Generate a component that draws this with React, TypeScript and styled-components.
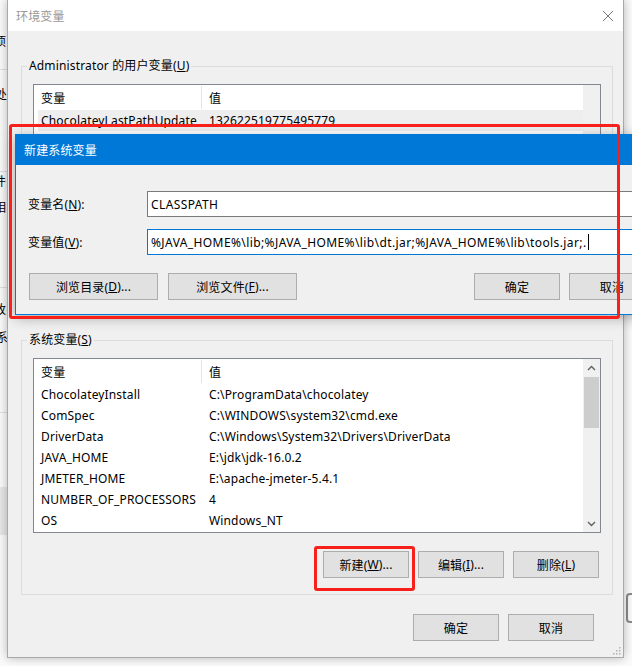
import React from "react";
import styled, { createGlobalStyle } from "styled-components";

const FONT = `"Noto Sans", "Noto Sans CJK SC", sans-serif`;

const GlobalStyle = createGlobalStyle`
  html, body { margin: 0; padding: 0; }
  body {
    width: 632px; height: 666px; overflow: hidden;
    font-family: ${FONT}; font-size: 12px; color: #000;
    letter-spacing: 0.15px;
  }
  * { box-sizing: border-box; }
`;

const Desktop = styled.div`
  position: relative;
  width: 632px;
  height: 666px;
  overflow: hidden;
  background: #f4f4f4;
`;

/* ---------- window behind ---------- */
const BackWindow = styled.div`
  position: absolute;
  inset: 0;
  background: #fbfbfb;
  display: flex;
  justify-content: space-between;
`;
const BackColumn = styled.div`
  width: 8px;
  display: flex;
  flex-direction: column;
  overflow: hidden;
`;
const BackSection = styled.div<{ $h: number; $pad?: number; $bg?: string; $line?: boolean; $gap?: number }>`
  flex-shrink: 0;
  height: ${(p) => p.$h}px;
  padding-top: ${(p) => p.$pad ?? 0}px;
  background: ${(p) => p.$bg ?? "transparent"};
  border-bottom: ${(p) => (p.$line ? "1px solid #e0e0e0" : "none")};
  display: flex;
  flex-direction: column;
  gap: ${(p) => p.$gap ?? 10}px;
`;
const BackGlyph = styled.span<{ $shift: number }>`
  display: block;
  margin-left: ${(p) => -p.$shift}px;
  line-height: 16px;
  font-size: 12px;
  white-space: nowrap;
`;
const BackControl = styled.div`
  width: 14px;
  height: 30px;
  margin-left: 2px;
  border: 2px solid #8a8a8a;
  border-radius: 4px;
`;

/* ---------- main window ---------- */
const Window = styled.div`
  position: absolute;
  left: 7px;
  top: -1px;
  width: 617px;
  height: 659px;
  background: #f0f0f0;
  border: 1px solid #a9a9a9;
  box-shadow: 0 0 10px rgba(0, 0, 0, 0.28);
  display: flex;
  flex-direction: column;
`;
const TitleBar = styled.div`
  height: 31px;
  flex-shrink: 0;
  background: #fff;
  display: flex;
  align-items: center;
  justify-content: space-between;
  padding-left: 8px;
  padding-right: 9px;
  color: #999;
  font-size: 12px;
`;
const WindowBody = styled.div`
  flex: 1;
  display: flex;
  flex-direction: column;
  padding: 27px 10px 0 13px;
  position: relative;
`;
const Group = styled.fieldset<{ $mt?: number }>`
  margin: ${(p) => p.$mt ?? 0}px 0 0 0;
  border: 1px solid #dcdcdc;
  padding: 10px 11px 16px 11px;
  min-width: 0;
`;
const GroupLegend = styled.legend`
  margin-left: -6px;
  padding: 0 2px;
  line-height: 16px;
  font-size: 12px;
`;
const ListView = styled.div<{ $h: number }>`
  height: ${(p) => p.$h}px;
  border: 1px solid #828790;
  background: #fff;
  display: flex;
`;
const ListContent = styled.div`
  flex: 1;
  display: flex;
  flex-direction: column;
  overflow: hidden;
`;
const HeaderRow = styled.div`
  height: 25px;
  flex-shrink: 0;
  display: flex;
  align-items: stretch;
`;
const HeaderCell = styled.div<{ $w?: number; $divider?: boolean }>`
  ${(p) => (p.$w ? `width: ${p.$w}px; flex-shrink: 0;` : "flex: 1;")}
  padding-left: 7px;
  display: flex;
  align-items: center;
  border-right: ${(p) => (p.$divider ? "1px solid #e5e5e5" : "none")};
  margin: 1px 0 1px 0;
`;
const Row = styled.div<{ $selected?: boolean }>`
  height: 21px;
  flex-shrink: 0;
  display: flex;
  align-items: center;
  margin-left: 4px;
  background: ${(p) => (p.$selected ? "#eeeeee" : "transparent")};
  white-space: nowrap;
`;
const Cell = styled.div<{ $w?: number }>`
  ${(p) => (p.$w ? `width: ${p.$w}px; flex-shrink: 0;` : "flex: 1;")}
  padding-left: 3px;
  overflow: hidden;
`;
const ValueCell = styled.div`
  flex: 1;
  padding-left: 7px;
  overflow: hidden;
`;
const ScrollBar = styled.div`
  width: 17px;
  flex-shrink: 0;
  background: #f0f0f0;
  display: flex;
  flex-direction: column;
`;
const ScrollArrow = styled.div`
  height: 17px;
  flex-shrink: 0;
  display: flex;
  align-items: center;
  justify-content: center;
`;
const ScrollTrack = styled.div`
  flex: 1;
  display: flex;
  flex-direction: column;
`;
const ScrollThumb = styled.div`
  height: 51px;
  margin: 1px 1px 0 1px;
  background: #cdcdcd;
`;
const ButtonRow = styled.div<{ $mt?: number; $pr?: number; $pl?: number }>`
  display: flex;
  justify-content: flex-end;
  gap: 9px;
  margin-top: ${(p) => p.$mt ?? 0}px;
  padding-right: ${(p) => p.$pr ?? 0}px;
  padding-left: ${(p) => p.$pl ?? 0}px;
`;
const Button = styled.button<{ $w?: number }>`
  width: ${(p) => p.$w ?? 86}px;
  height: 27px;
  padding: 0;
  background: #e1e1e1;
  border: 1px solid #adadad;
  border-radius: 0;
  font-family: ${FONT};
  font-size: 12px;
  letter-spacing: 0.15px;
  color: #000;
  display: flex;
  align-items: center;
  justify-content: center;
  white-space: nowrap;
`;
const Grip = styled.div`
  position: absolute;
  right: 2px;
  bottom: 2px;
  width: 10px;
  height: 10px;
  display: flex;
`;

/* ---------- overlay dialog ---------- */
const Dialog = styled.div`
  position: absolute;
  left: 15px;
  top: 134px;
  width: 653px;
  height: 181px;
  background: #f0f0f0;
  border: 1px solid #0078d7;
  box-shadow: 0 3px 12px rgba(0, 0, 0, 0.3);
  display: flex;
  flex-direction: column;
`;
const DialogTitle = styled.div`
  height: 30px;
  flex-shrink: 0;
  background: #0078d7;
  color: #fff;
  display: flex;
  align-items: center;
  padding-left: 8px;
  font-size: 12px;
`;
const DialogBody = styled.div`
  flex: 1;
  padding: 26px 12px 0 12px;
  display: flex;
  flex-direction: column;
  gap: 12px;
`;
const FieldRow = styled.div`
  display: grid;
  grid-template-columns: 119px 1fr;
  align-items: center;
`;
const TextBox = styled.div<{ $focused?: boolean }>`
  height: 26px;
  background: #fff;
  border: 1px solid ${(p) => (p.$focused ? "#0078d7" : "#7a7a7a")};
  padding: 0 3px;
  display: flex;
  align-items: center;
  white-space: nowrap;
  overflow: hidden;
  letter-spacing: 0.4px;
`;
const Caret = styled.span`
  display: inline-block;
  width: 1px;
  height: 16px;
  background: #000;
  margin-left: 1px;
`;
const DialogButtons = styled.div`
  display: flex;
  gap: 10px;
  margin-top: 6px;
  padding-left: 1px;
`;
const Spacer = styled.div`
  flex: 1;
`;
const DialogButtonPair = styled.div`
  display: flex;
  gap: 9px;
`;

/* ---------- annotations ---------- */
const Mark = styled.div<{ $l: number; $t: number; $w: number; $h: number }>`
  position: absolute;
  left: ${(p) => p.$l}px;
  top: ${(p) => p.$t}px;
  width: ${(p) => p.$w}px;
  height: ${(p) => p.$h}px;
  border: 3px solid #f7201a;
  border-radius: 3px;
  pointer-events: none;
`;

const Mn = ({ k }: { k: string }) => <span style={{ textDecoration: "underline" }}>{k}</span>;

const Chevron = ({ up }: { up?: boolean }) => (
  <svg width="9" height="6" viewBox="0 0 9 6">
    <polyline
      points={up ? "1,5 4.5,1.5 8,5" : "1,1 4.5,4.5 8,1"}
      fill="none"
      stroke="#606060"
      strokeWidth="1.4"
    />
  </svg>
);

const CloseIcon = () => (
  <svg width="12" height="12" viewBox="0 0 12 12">
    <path d="M1 1 L11 11 M11 1 L1 11" stroke="#777" strokeWidth="1" fill="none" />
  </svg>
);

const sysVars: [string, string][] = [
  ["ChocolateyInstall", "C:\\ProgramData\\chocolatey"],
  ["ComSpec", "C:\\WINDOWS\\system32\\cmd.exe"],
  ["DriverData", "C:\\Windows\\System32\\Drivers\\DriverData"],
  ["JAVA_HOME", "E:\\jdk\\jdk-16.0.2"],
  ["JMETER_HOME", "E:\\apache-jmeter-5.4.1"],
  ["NUMBER_OF_PROCESSORS", "4"],
  ["OS", "Windows_NT"],
];

const userVars: [string, string][] = [
  ["ChocolateyLastPathUpdate", "132622519775495779"],
  ["OneDrive", "C:\\Users\\Administrator\\OneDrive"],
  ["Path", "C:\\Users\\Administrator\\AppData\\Local\\Microsoft\\WindowsApps;"],
  ["TEMP", "C:\\Users\\Administrator\\AppData\\Local\\Temp"],
  ["TMP", "C:\\Users\\Administrator\\AppData\\Local\\Temp"],
];

const VarList = ({
  rows,
  height,
  selectedFirst,
  arrows,
}: {
  rows: [string, string][];
  height: number;
  selectedFirst?: boolean;
  arrows?: boolean;
}) => (
  <ListView $h={height}>
    <ListContent>
      <HeaderRow>
        <HeaderCell $w={168} $divider>变量</HeaderCell>
        <HeaderCell>值</HeaderCell>
      </HeaderRow>
      {rows.map(([n, v], i) => (
        <Row key={n} $selected={selectedFirst && i === 0}>
          <Cell $w={164}>{n}</Cell>
          <ValueCell>{v}</ValueCell>
        </Row>
      ))}
    </ListContent>
    <ScrollBar>
      {arrows && (
        <>
          <ScrollArrow>
            <Chevron up />
          </ScrollArrow>
          <ScrollTrack>
            <ScrollThumb />
          </ScrollTrack>
          <ScrollArrow>
            <Chevron />
          </ScrollArrow>
        </>
      )}
    </ScrollBar>
  </ListView>
);

export default function App() {
  return (
    <Desktop>
      <GlobalStyle />
      <BackWindow>
        <BackColumn>
          <BackSection $h={70} $pad={34} $line>
            <BackGlyph $shift={6}>项</BackGlyph>
          </BackSection>
          <BackSection $h={102} $pad={17} $line>
            <BackGlyph $shift={5}>处</BackGlyph>
          </BackSection>
          <BackSection $h={116} $pad={2} $line>
            <BackGlyph $shift={6}>件</BackGlyph>
            <BackGlyph $shift={6}>相</BackGlyph>
          </BackSection>
          <BackSection $h={125} $pad={14} $gap={12} $line>
            <BackGlyph $shift={6}>改</BackGlyph>
            <BackGlyph $shift={4}>系</BackGlyph>
          </BackSection>
          <BackSection $h={74} />
          <BackSection $h={48} $bg="#e8e8e8" />
        </BackColumn>
        <BackColumn>
          <BackSection $h={593} />
          <BackControl />
        </BackColumn>
      </BackWindow>

      <Window>
        <TitleBar>
          <span>环境变量</span>
          <CloseIcon />
        </TitleBar>
        <WindowBody>
          <Group>
            <GroupLegend>
              Administrator 的用户变量(<Mn k="U" />)
            </GroupLegend>
            <VarList rows={userVars} height={173} selectedFirst />
            <ButtonRow $mt={18} $pr={1}>
              <Button>
                新建(<Mn k="N" />)...
              </Button>
              <Button>
                编辑(<Mn k="E" />)...
              </Button>
              <Button>
                删除(<Mn k="D" />)
              </Button>
            </ButtonRow>
          </Group>
          <Group $mt={13}>
            <GroupLegend>
              系统变量(<Mn k="S" />)
            </GroupLegend>
            <VarList rows={sysVars} height={175} arrows />
            <ButtonRow $mt={18} $pr={2}>
              <Button>
                新建(<Mn k="W" />)...
              </Button>
              <Button>
                编辑(<Mn k="I" />)...
              </Button>
              <Button>
                删除(<Mn k="L" />)
              </Button>
            </ButtonRow>
          </Group>
          <ButtonRow $mt={19} $pr={19}>
            <Button>确定</Button>
            <Button>取消</Button>
          </ButtonRow>
          <Grip>
            <svg width="10" height="10" viewBox="0 0 10 10">
              {[
                [8, 2],
                [5, 5],
                [8, 5],
                [2, 8],
                [5, 8],
                [8, 8],
              ].map(([x, y]) => (
                <rect key={`${x}-${y}`} x={x} y={y} width="1.5" height="1.5" fill="#b0b0b0" />
              ))}
            </svg>
          </Grip>
        </WindowBody>
      </Window>

      <Dialog>
        <DialogTitle>新建系统变量</DialogTitle>
        <DialogBody>
          <FieldRow>
            <span>
              变量名(<Mn k="N" />):
            </span>
            <TextBox>CLASSPATH</TextBox>
          </FieldRow>
          <FieldRow>
            <span>
              变量值(<Mn k="V" />):
            </span>
            <TextBox $focused>
              %JAVA_HOME%\lib;%JAVA_HOME%\lib\dt.jar;%JAVA_HOME%\lib\tools.jar;.
              <Caret />
            </TextBox>
          </FieldRow>
          <DialogButtons>
            <Button $w={129}>
              浏览目录(<Mn k="D" />)...
            </Button>
            <Button $w={129}>
              浏览文件(<Mn k="F" />)...
            </Button>
            <Spacer />
            <DialogButtonPair>
              <Button>确定</Button>
              <Button>取消</Button>
            </DialogButtonPair>
          </DialogButtons>
        </DialogBody>
      </Dialog>

      <Mark $l={9} $t={124} $w={611} $h={195} />
      <Mark $l={314} $t={546} $w={101} $h={45} />
    </Desktop>
  );
}
